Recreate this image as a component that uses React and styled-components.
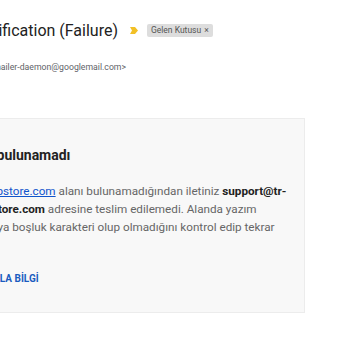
import React from 'react';
import styled, { createGlobalStyle } from 'styled-components';

const GlobalStyle = createGlobalStyle`
  body {
    margin: 0;
    background: #fff;
    overflow: hidden;
    font-family: Roboto, "Liberation Sans", sans-serif;
  }
`

const Page = styled.div`
  width: 350px;
  height: 350px;
  overflow: hidden;
  padding-top: 16px;
  box-sizing: border-box;
`

const Header = styled.div`
  display: flex;
  align-items: center;
  height: 28px;
`

// clip box: text overflows to the left, its end stays at the box edge
const EndClip = styled.div`
  width: ${({ width }) => width}px;
  flex-shrink: 0;
  display: flex;
  justify-content: flex-end;
  white-space: nowrap;
`

const Subject = styled.span`
  font-size: 16px;
  color: #222;
`

const Marker = styled.svg`
  margin-left: 12px;
  flex-shrink: 0;
`

const Chip = styled.span`
  margin-left: 9px;
  height: 13px;
  padding: 0 4px;
  display: inline-flex;
  align-items: center;
  gap: 3px;
  background: #dddddd;
  border-radius: 2px;
  font-size: 8.5px;
  color: #555;
  white-space: nowrap;
`

const SenderRow = styled.div`
  display: flex;
  height: 14px;
  margin-top: 16px;
  align-items: center;
`

const Sender = styled.span`
  font-size: 8.7px;
  color: #5f6368;
  b {
    color: #222;
    font-weight: 700;
    margin-right: 3px;
  }
`

const Card = styled.div`
  margin-top: 44px;
  margin-left: -80px;
  width: 385px;
  box-sizing: border-box;
  background: #f8f8f8;
  border: 1px solid #ececec;
  padding: 24px 16px 22px 35px;
`

const Heading = styled.h2`
  margin: 0;
  font-size: 14px;
  line-height: 24px;
  font-weight: 700;
  color: #222;
  white-space: nowrap;
`

const Body = styled.p`
  margin: 15px 0 0 -5px;
  font-size: 11.7px;
  line-height: 18px;
  color: #666;
  white-space: nowrap;
  a {
    color: #1155cc;
    text-decoration: underline;
  }
  b {
    color: #222;
    font-weight: 700;
  }
`

const MoreButton = styled.div`
  margin: 12px 0 0 -3px;
  height: 24px;
  display: flex;
  align-items: center;
  font-size: 10px;
  font-weight: 700;
  color: #1a5cc0;
  white-space: nowrap;
`

export default function App() {
  return (
    <Page>
      <GlobalStyle />
      <Header>
        <EndClip width={118}>
          <Subject>Delivery Status Notification (Failure)</Subject>
        </EndClip>
        <Marker width="8" height="7" viewBox="0 0 8 7">
          <polygon points="0,0 5,0 8,3.5 5,7 0,7 2,3.5" fill="#f2c026" />
        </Marker>
        <Chip>Gelen Kutusu <span>×</span></Chip>
      </Header>
      <SenderRow>
        <EndClip width={126}>
          <Sender><b>Mail Delivery Subsystem</b>&lt;mailer-daemon@googlemail.com&gt;</Sender>
        </EndClip>
      </SenderRow>
      <Card>
        <Heading>Adres bulunamadı</Heading>
        <Body>
          <a href="#">tr-webappstore.com</a> alanı bulunamadığından iletiniz <b>support@tr-</b><br />
          <b>webappstore.com</b> adresine teslim edilemedi. Alanda yazım<br />
          hatası veya boşluk karakteri olup olmadığını kontrol edip tekrar<br />
          deneyin.
        </Body>
        <MoreButton>DAHA FAZLA BİLGİ</MoreButton>
      </Card>
    </Page>
  );
}
